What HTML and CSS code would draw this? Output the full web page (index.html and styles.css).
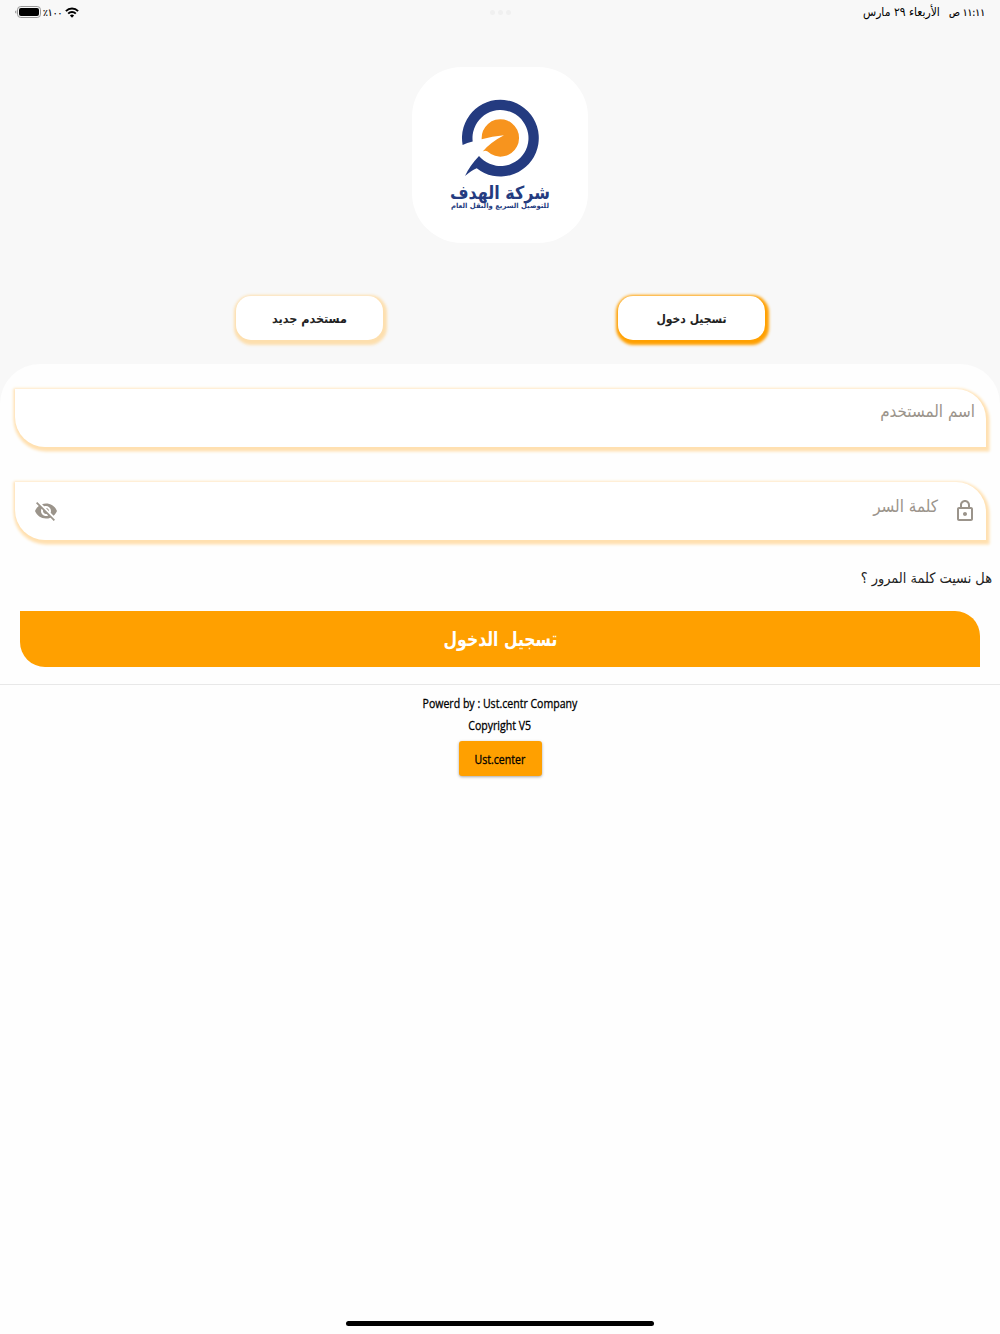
FILE: index.html
```html
<!DOCTYPE html>
<html lang="ar" dir="rtl">
<head>
  <meta charset="UTF-8">
  <meta name="viewport" content="width=device-width, initial-scale=1.0">
  <title>تسجيل الدخول</title>
  <link rel="stylesheet" href="styles.css">
</head>
<body>
  <header class="top">
    <div class="status-bar">
      <div class="status-time"><span class="clock">١١:١١ ص</span><span class="date">الأربعاء ٢٩ مارس</span></div>
      <div class="dots"><i></i><i></i><i></i></div>
      <div class="status-icons" dir="ltr">
        <svg class="battery" width="26" height="12" viewBox="0 0 26 12">
          <path d="M1.3 4.3v3.4Q0 7.2 0 6t1.3-1.7z" fill="#999"/>
          <rect x="2.5" y=".5" width="23" height="11" rx="3.3" fill="none" stroke="#999"/>
          <rect x="4" y="2" width="20" height="8" rx="2" fill="#000"/>
        </svg>
        <span class="percent"><bdo dir="ltr">٪١٠٠</bdo></span>
        <svg class="wifi" width="14" height="11" viewBox="0 0 14 11" fill="none" stroke="#000" stroke-width="2">
          <path d="M.9 4.1a8.7 8.7 0 0 1 12.2 0M3.2 6.6a5.4 5.4 0 0 1 7.6 0"/>
          <path d="M7 10.7 4.9 8.6a3 3 0 0 1 4.2 0z" fill="#000" stroke="none"/>
        </svg>
      </div>
    </div>

    <div class="logo">
      <svg width="176" height="176" viewBox="0 0 176 176">
        <path d="M50.600 77.900A38.400 38.400 0 1 1 64.700 101.300Q59.500 103.500 53 109 57.500 99 67 89A28 28 0 1 0 60.700 74.500Q55 75.800 50.600 77.900Z" fill="#243b80"/>
        <path d="M69.700 72.300A18.700 18.700 0 1 1 75.600 84.600Q73.500 83.200 70.700 84.400 79 75 92 68.300 80 69.500 69.700 72.300Z" fill="#f7941e"/>
        <text class="logo-name" x="88" y="132" text-anchor="middle" textLength="100" lengthAdjust="spacingAndGlyphs">شركة الهدف</text>
        <text class="logo-sub" x="88" y="141" text-anchor="middle" textLength="98" lengthAdjust="spacingAndGlyphs">للتوصيل السريع والنقل العام</text>
      </svg>
    </div>

    <nav class="tabs">
      <button class="tab active"><span>تسجيل دخول</span></button>
      <button class="tab"><span>مستخدم جديد</span></button>
    </nav>
  </header>

  <main class="sheet">
    <div class="field">
      <span class="placeholder user">اسم المستخدم</span>
    </div>
    <div class="field">
      <svg class="lock" width="24" height="24" viewBox="0 0 24 24" fill="#9b948b">
        <path d="M18 8h-1V6c0-2.760-2.240-5-5-5S7 3.240 7 6v2H6c-1.100 0-2 .9-2 2v10c0 1.100.9 2 2 2h12c1.100 0 2-.9 2-2V10c0-1.100-.9-2-2-2zM9 6c0-1.660 1.340-3 3-3s3 1.340 3 3v2H9V6zm9 14H6V10h12v10zm-6-3c1.100 0 2-.9 2-2s-.9-2-2-2-2 .9-2 2 .9 2 2 2z"/>
      </svg>
      <span class="placeholder pass">كلمة السر</span>
      <svg class="eye" width="24" height="24" viewBox="0 0 24 24" fill="#9b948b">
        <path d="M12 7c2.760 0 5 2.240 5 5 0 .65-.13 1.260-.36 1.830l2.920 2.920c1.510-1.260 2.700-2.890 3.430-4.750-1.730-4.390-6-7.500-11-7.500-1.400 0-2.740.25-3.980.7l2.160 2.160C10.740 7.130 11.350 7 12 7zM2 4.270l2.280 2.280.46.46C3.080 8.300 1.780 10.020 1 12c1.730 4.390 6 7.500 11 7.500 1.550 0 3.030-.3 4.380-.84l.42.42L19.730 22 21 20.730 3.270 3 2 4.270zM7.530 9.800l1.550 1.550c-.05.21-.08.43-.08.65 0 1.660 1.340 3 3 3 .22 0 .44-.03.65-.08l1.550 1.550c-.67.33-1.410.53-2.200.53-2.760 0-5-2.240-5-5 0-.79.2-1.530.53-2.200zm4.310-.78l3.150 3.150.02-.16c0-1.660-1.340-3-3-3l-.17.01z"/>
      </svg>
    </div>

    <a class="forgot">هل نسيت كلمة المرور ؟</a>
    <button class="login"><span>تسجيل الدخول</span></button>
  </main>

  <footer class="footer" dir="ltr">
    <p><span class="powered">Powerd by : Ust.centr Company</span></p>
    <p><span class="copyright">Copyright V5</span></p>
    <button class="center-btn"><span>Ust.center</span></button>
  </footer>

  <div class="home-bar"></div>
</body>
</html>
```

FILE: styles.css
```css
* {
  box-sizing: border-box;
}
body {
  margin: 0;
  height: 1334px;
  display: flex;
  flex-direction: column;
  background: #fefefe;
  color: #222;
  font-family: "DejaVu Sans Condensed", "DejaVu Sans", sans-serif;
  overflow: hidden;
}
button {
  border: 0;
  padding: 0;
  font-family: inherit;
}
span {
  white-space: nowrap;
}
.top {
  height: 404px;
  flex: none;
  margin-bottom: -40px;
  background: #f8f8f8;
}
.status-bar {
  display: grid;
  grid-template-columns: 1fr auto 1fr;
  align-items: center;
  height: 24px;
  padding: 0 15px;
  color: #000;
  font-size: 12px;
}
.status-time {
  display: flex;
  align-items: center;
  gap: 9px;
  height: 22px;
}
.clock {
  font-size: 10px;
  -webkit-text-stroke: 0.2px #000;
}
.dots {
  display: flex;
  gap: 3px;
}
.dots i {
  width: 5px;
  height: 5px;
  border-radius: 50%;
  background: #f0f0f0;
}
.status-icons {
  display: flex;
  align-items: center;
}
.percent {
  width: 19px;
  margin: 0 3px 0 2px;
  font-size: 10px;
  -webkit-text-stroke: 0.2px #000;
}
.logo {
  width: 176px;
  height: 176px;
  margin: 43px auto 0;
  border-radius: 50px;
  background: #fff;
}
.logo svg {
  display: block;
}
.logo-name {
  fill: #243b80;
  font-size: 18px;
  font-weight: bold;
}
.logo-sub {
  fill: #243b80;
  font-size: 7px;
  font-weight: bold;
}
.tabs {
  display: flex;
  justify-content: center;
  gap: 235px;
  margin-top: 53px;
  padding-left: 1px;
}
.tab {
  width: 147px;
  height: 44px;
  border-radius: 15px;
  background: #fff;
  box-shadow: 1px 2px 3px 2.5px #fddfae;
  color: #222;
  font-size: 12.5px;
  font-weight: bold;
}
.tab.active {
  box-shadow: 1px 2px 3px 2.5px #ffa000;
}
.tab.active span {
  font-size: 12px;
}
.sheet {
  flex: none;
  height: 321px;
  padding: 25px 14px 0 15px;
  border-bottom: 1px solid #e8e8e8;
  border-radius: 40px 40px 0 0;
  background: #fefefe;
}
.field {
  display: flex;
  align-items: flex-start;
  height: 58px;
  margin-bottom: 35px;
  border-radius: 0 30px 0 30px;
  background: #fff;
  box-shadow: 1px 2px 3px 2.5px #ffe0b0;
}
.placeholder {
  color: #9b948b;
  font-size: 16.9px;
  line-height: 24px;
}
.user {
  margin: 10px 11px 0 0;
}
.pass {
  margin: 12px 15px 0 0;
}
.lock {
  margin: 17px 9px 0 0;
}
.eye {
  margin: 17px auto 0 19px;
}
.forgot {
  display: block;
  width: max-content;
  margin: -7px -6px 0 0;
  font-size: 14.4px;
  line-height: 20px;
}
.login {
  display: block;
  width: 960px;
  height: 56px;
  margin: 23px 6px 0 0;
  border-radius: 0 25px 0 25px;
  background: #ffa000;
  color: #fff;
  font-size: 20px;
  font-weight: bold;
}
.login span {
  display: inline-block;
  transform: scaleX(0.87);
}
.footer {
  display: flex;
  flex-direction: column;
  align-items: center;
  padding-top: 8px;
  color: #000;
  font-family: "Open Sans", sans-serif;
  font-size: 12px;
}
.footer p {
  margin: 0;
  line-height: 22px;
}
.footer span {
  display: inline-block;
  transform: scaleX(0.88);
  -webkit-text-stroke: 0.3px #000;
}
.center-btn {
  width: 83px;
  height: 35px;
  margin-top: 4px;
  padding-top: 1px;
  border-radius: 3px;
  background: #ffa000;
  box-shadow: 0 1px 3px rgba(0, 0, 0, 0.35);
  color: #000;
  font-size: 12px;
}
.home-bar {
  width: 308px;
  height: 5px;
  margin: auto auto 8px;
  border-radius: 3px;
  background: #000;
}
```
